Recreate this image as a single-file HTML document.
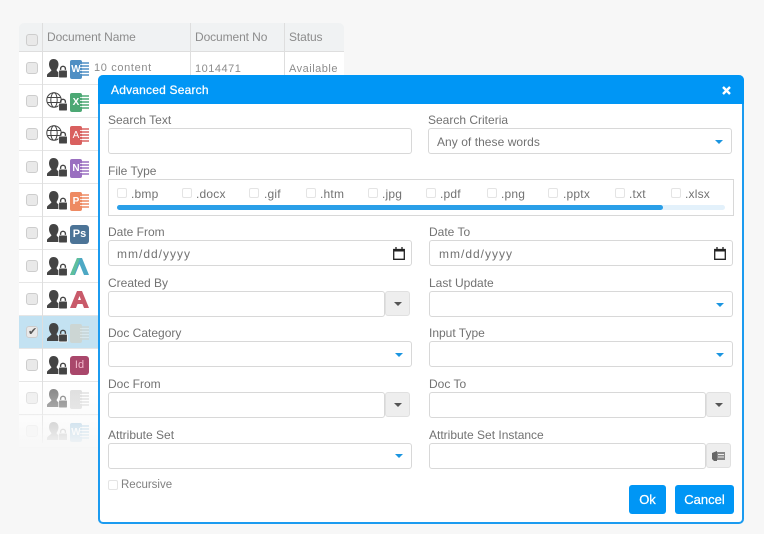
<!DOCTYPE html>
<html><head><meta charset="utf-8"><style>
html,body{margin:0;padding:0}
body{width:764px;height:534px;background:#f7f7f7;position:relative;overflow:hidden;font-family:"Liberation Sans",sans-serif;color:#666}
div,span,svg{position:absolute;box-sizing:border-box}
.t{white-space:nowrap}
.lb{font-size:12px;color:#727272;white-space:nowrap;line-height:14px}
.in{background:#fff;border:1px solid #d8d8d8;border-radius:3px;height:26px}
.btn{background:#eee;border:1px solid #e0e0e0;border-radius:3px;width:25px;height:25px}
.ar{width:0;height:0;border-left:4px solid transparent;border-right:4px solid transparent;border-top:4px solid #1b95e0}
.ag{width:0;height:0;border-left:4px solid transparent;border-right:4px solid transparent;border-top:4px solid #555;left:8px;top:10px}
.cb{width:10px;height:10px;border:1px solid #e4e4e4;border-radius:2px;background:#fff}
.ext{font-size:12px;letter-spacing:.2px;color:#727272;white-space:nowrap;line-height:14px;top:187px}
.rc{width:12px;height:12px;left:26px;margin-top:1px;background:#e9e9e9;border:1px solid #cdcdcd;border-radius:3px}
.row{left:19px;width:325px;height:33px;background:#fff;border-bottom:1px solid #e6e6e6}
.hd{font-size:12px;color:#8c8c8c;letter-spacing:-.1px;white-space:nowrap;top:30px;line-height:14px}
.ic{left:70px;width:12px;height:19px;border-radius:2px;color:#fff;font-size:10px;font-weight:bold;text-align:center;line-height:19px}
.lines{left:80px;width:9px;height:14px;opacity:.75}
</style></head><body>

<!-- table -->
<div style="left:19px;top:23px;width:325px;height:29px;background:#f0f2f3;border-bottom:1px solid #dedede;border-radius:5px 5px 0 0"></div>
<div class="row" style="top:52px"></div><div class="row" style="top:85px"></div><div class="row" style="top:118px"></div><div class="row" style="top:151px"></div><div class="row" style="top:184px"></div><div class="row" style="top:217px"></div><div class="row" style="top:250px"></div><div class="row" style="top:283px"></div>
<div class="row" style="top:316px;background:#c3e2f2"></div>
<div class="row" style="top:349px"></div><div class="row" style="top:382px"></div><div class="row" style="top:415px"></div>
<div style="left:42px;top:23px;width:1px;height:420px;background:#dedede"></div>
<div style="left:190px;top:23px;width:1px;height:52px;background:#dedede"></div>
<div style="left:284px;top:23px;width:1px;height:52px;background:#dedede"></div>
<div class="rc" style="top:33px"></div>
<div class="hd" style="left:47px">Document Name</div>
<div class="hd" style="left:195px">Document No</div>
<div class="hd" style="left:289px">Status</div>
<div class="t" style="left:94px;top:62px;font-size:11px;letter-spacing:.65px;color:#8c8c8c;line-height:13px">10 content</div>
<div class="t" style="left:195px;top:63px;font-size:11px;letter-spacing:.5px;color:#8c8c8c;line-height:13px">1014471</div>
<div class="t" style="left:289px;top:63px;font-size:11px;letter-spacing:.5px;color:#8c8c8c;line-height:13px">Available</div>

<div class="rc" style="top:61px"></div><div class="rc" style="top:94px"></div><div class="rc" style="top:127px"></div><div class="rc" style="top:160px"></div><div class="rc" style="top:193px"></div><div class="rc" style="top:226px"></div><div class="rc" style="top:259px"></div><div class="rc" style="top:292px"></div><div class="rc" style="top:325px"></div><div class="rc" style="top:358px"></div><div class="rc" style="top:391px;opacity:.7"></div><div class="rc" style="top:424px;opacity:.35"></div>
<div class="t" style="left:28px;top:326px;font-size:11px;line-height:13px;color:#555">✔</div>

<!-- person lock icons -->
<svg style="left:46px;top:0;width:22px;height:440px" viewBox="0 0 22 440">
<defs><g id="p"><path d="M7.500 0c3.200 0 5 2.300 5 5.300 0 2.300-1 4.200-2 5.700.3 1.300 1.800 2 2.700 2.700V18H1v-2.300c.8-1.700 3.600-2.800 4.500-4.500C4.300 9.800 3 7.800 3 5.300 3 2.300 4.500 0 7.500 0z" fill="#444"/><path d="M14.600 12v-2.300a2.400 2.400 0 0 1 4.800 0V12" fill="none" stroke="#444" stroke-width="1.400"/><rect x="12.700" y="11.200" width="8.600" height="7.700" rx="1" fill="#444" stroke="#fff" stroke-width=".7"/></g>
<g id="g"><circle cx="8" cy="8" r="7.200" fill="none" stroke="#444" stroke-width="1"/><ellipse cx="8" cy="8" rx="3.200" ry="7.200" fill="none" stroke="#444"/><path d="M1 5.500h14M1 10.500h14" stroke="#444"/><path d="M14.600 12v-2.300a2.400 2.400 0 0 1 4.800 0V12" fill="none" stroke="#444" stroke-width="1.400"/><rect x="12.700" y="11.200" width="8.600" height="7.700" rx="1" fill="#444" stroke="#fff" stroke-width=".7"/></g></defs>
<use href="#p" y="59"/><use href="#g" y="92"/><use href="#g" y="125"/><use href="#p" y="158"/><use href="#p" y="191"/><use href="#p" y="224"/><use href="#p" y="257"/><use href="#p" y="290"/><use href="#p" y="323"/><use href="#p" y="356"/><use href="#p" y="389" opacity=".7"/><use href="#p" y="422" opacity=".35"/>
</svg>

<!-- app icons -->
<div class="ic" style="top:60px;background:#4f8fc4">W</div><div class="lines" style="top:62px;background:repeating-linear-gradient(#4f8fc4 0 2px,#fff 2px 3px)"></div>
<div class="ic" style="top:93px;background:#4ca874">X</div><div class="lines" style="top:95px;background:repeating-linear-gradient(#4ca874 0 2px,#fff 2px 3px)"></div>
<div class="ic" style="top:126px;background:#d9605f;font-weight:normal">A</div><div class="lines" style="top:128px;background:repeating-linear-gradient(#d9605f 0 2px,#fff 2px 3px)"></div>
<div class="ic" style="top:159px;background:#9a6fc0">N</div><div class="lines" style="top:161px;background:repeating-linear-gradient(#9a6fc0 0 2px,#fff 2px 3px)"></div>
<div class="ic" style="top:192px;background:#ee8a62">P</div><div class="lines" style="top:194px;background:repeating-linear-gradient(#ee8a62 0 2px,#fff 2px 3px)"></div>
<div class="ic" style="top:225px;width:19px;background:#4c7497;border-radius:3px;font-size:11px">Ps</div>
<svg style="left:70px;top:257px;width:19px;height:20px" viewBox="0 0 19 20"><path d="M0 18L7 1h5l7 17h-5L9.500 7 5 18z" fill="#4da8c4"/><path d="M0 18L7 1h3L4 18z" fill="#5fbf9c"/></svg>
<svg style="left:70px;top:290px;width:19px;height:20px" viewBox="0 0 19 20"><path d="M0 18L7 1h5l7 17h-5l-1.500-4h-5L6 18zM8 10h3L9.500 6z" fill="#c95a6a"/></svg>
<div class="ic" style="top:324px;background:#ccd6d4"></div><div class="lines" style="top:326px;background:repeating-linear-gradient(#ccd6d4 0 2px,#dfeaec 2px 3px)"></div>
<div class="ic" style="top:356px;width:19px;background:#a9476b;border-radius:3px;font-weight:normal;font-size:11px;color:#f3b8cc">Id</div>
<div class="ic" style="top:390px;background:#dcdcdc"></div><div class="lines" style="top:392px;background:repeating-linear-gradient(#dcdcdc 0 2px,#fff 2px 3px)"></div>
<div class="ic" style="top:423px;background:#b5d4e8">W</div><div class="lines" style="top:425px;background:repeating-linear-gradient(#b5d4e8 0 2px,#fff 2px 3px)"></div>

<!-- bottom fade -->
<div style="left:0;top:415px;width:98px;height:50px;background:linear-gradient(rgba(247,247,247,.3),#f7f7f7 70%)"></div>
<div style="left:0;top:380px;width:98px;height:36px;background:linear-gradient(rgba(247,247,247,0),rgba(247,247,247,.45))"></div>

<!-- modal -->
<div style="left:98px;top:75px;width:646px;height:449px;background:#fff;border:2px solid #1b9bf0;border-top:0;border-radius:5px"></div>
<div style="left:98px;top:75px;width:646px;height:29px;background:#0096f5;border-radius:5px 5px 0 0"></div>
<div class="t" style="left:111px;top:83px;font-size:12px;color:#fff;line-height:14px;letter-spacing:.2px;-webkit-text-stroke:.25px #fff">Advanced Search</div>
<svg style="left:722px;top:86px;width:9px;height:9px" viewBox="0 0 9 9"><path d="M1 1l7 7M8 1l-7 7" stroke="#fff" stroke-width="2.400"/></svg>

<div class="lb" style="left:108px;top:113px">Search Text</div>
<div class="in" style="left:108px;top:128px;width:304px"></div>
<div class="lb" style="left:428px;top:113px">Search Criteria</div>
<div class="in" style="left:428px;top:128px;width:304px"></div>
<div class="t" style="left:437px;top:135px;font-size:12px;letter-spacing:.05px;color:#727272;line-height:14px">Any of these words</div>
<div class="ar" style="left:715px;top:140px"></div>

<div class="lb" style="left:108px;top:164px">File Type</div>
<div style="left:108px;top:179px;width:626px;height:37px;background:#fff;border:1px solid #d8d8d8"></div>
<div class="cb" style="left:117px;top:188px"></div><div class="ext" style="left:131px">.bmp</div>
<div class="cb" style="left:182px;top:188px"></div><div class="ext" style="left:196px">.docx</div>
<div class="cb" style="left:249px;top:188px"></div><div class="ext" style="left:264px">.gif</div>
<div class="cb" style="left:306px;top:188px"></div><div class="ext" style="left:320px">.htm</div>
<div class="cb" style="left:368px;top:188px"></div><div class="ext" style="left:382px">.jpg</div>
<div class="cb" style="left:426px;top:188px"></div><div class="ext" style="left:440px">.pdf</div>
<div class="cb" style="left:487px;top:188px"></div><div class="ext" style="left:501px">.png</div>
<div class="cb" style="left:548px;top:188px"></div><div class="ext" style="left:563px">.pptx</div>
<div class="cb" style="left:615px;top:188px"></div><div class="ext" style="left:629px">.txt</div>
<div class="cb" style="left:671px;top:188px"></div><div class="ext" style="left:685px">.xlsx</div>
<div style="left:117px;top:205px;width:608px;height:5px;background:#e3f1fb;border-radius:3px"></div>
<div style="left:117px;top:205px;width:546px;height:5px;background:#2a9fe8;border-radius:3px"></div>

<div class="lb" style="left:108px;top:225px">Date From</div>
<div class="in" style="left:108px;top:240px;width:304px"></div>
<div class="t" style="left:117px;top:247px;font-size:12px;letter-spacing:1px;color:#727272;line-height:14px">mm/dd/yyyy</div>
<svg style="left:393px;top:247px;width:12px;height:13px" viewBox="0 0 12 13"><path d="M.7 2.500h10.600v9.800H.7z" fill="none" stroke="#222" stroke-width="1.300"/><path d="M1 2h10v2.500H1z" fill="#222"/><path d="M3 0v2M9 0v2" stroke="#222" stroke-width="1.300"/></svg>
<div class="lb" style="left:429px;top:225px">Date To</div>
<div class="in" style="left:429px;top:240px;width:304px"></div>
<div class="t" style="left:439px;top:247px;font-size:12px;letter-spacing:1px;color:#727272;line-height:14px">mm/dd/yyyy</div>
<svg style="left:714px;top:247px;width:12px;height:13px" viewBox="0 0 12 13"><path d="M.7 2.500h10.600v9.800H.7z" fill="none" stroke="#222" stroke-width="1.300"/><path d="M1 2h10v2.500H1z" fill="#222"/><path d="M3 0v2M9 0v2" stroke="#222" stroke-width="1.300"/></svg>

<div class="lb" style="left:108px;top:276px">Created By</div>
<div class="in" style="left:108px;top:291px;width:277px"></div>
<div class="btn" style="left:385px;top:291px"><div class="ag"></div></div>
<div class="lb" style="left:429px;top:276px">Last Update</div>
<div class="in" style="left:429px;top:291px;width:304px"></div>
<div class="ar" style="left:716px;top:303px"></div>

<div class="lb" style="left:108px;top:326px">Doc Category</div>
<div class="in" style="left:108px;top:341px;width:304px"></div>
<div class="ar" style="left:395px;top:353px"></div>
<div class="lb" style="left:429px;top:326px">Input Type</div>
<div class="in" style="left:429px;top:341px;width:304px"></div>
<div class="ar" style="left:716px;top:353px"></div>

<div class="lb" style="left:108px;top:377px">Doc From</div>
<div class="in" style="left:108px;top:392px;width:277px"></div>
<div class="btn" style="left:385px;top:392px"><div class="ag"></div></div>
<div class="lb" style="left:429px;top:377px">Doc To</div>
<div class="in" style="left:429px;top:392px;width:277px"></div>
<div class="btn" style="left:706px;top:392px"><div class="ag"></div></div>

<div class="lb" style="left:108px;top:428px">Attribute Set</div>
<div class="in" style="left:108px;top:443px;width:304px"></div>
<div class="ar" style="left:395px;top:454px"></div>
<div class="lb" style="left:429px;top:428px">Attribute Set Instance</div>
<div class="in" style="left:429px;top:443px;width:277px"></div>
<div class="btn" style="left:706px;top:443px"><svg style="left:5px;top:7px;width:13px;height:10px" viewBox="0 0 13 10"><path d="M0 2l5-2v10H2L0 8z" fill="#666"/><path d="M5 1h8v8H5z" fill="#888"/><path d="M6 3.500h6M6 6h6" stroke="#eee"/></svg></div>

<div class="cb" style="left:108px;top:480px"></div>
<div class="lb" style="left:121px;top:478px;color:#808080;font-size:11.5px">Recursive</div>

<div style="left:629px;top:485px;width:37px;height:29px;background:#0096f5;border-radius:3px;color:#fff;font-size:13px;text-align:center;line-height:29px;-webkit-text-stroke:.25px #fff">Ok</div>
<div style="left:675px;top:485px;width:59px;height:29px;background:#0096f5;border-radius:3px;color:#fff;font-size:13px;text-align:center;line-height:29px;-webkit-text-stroke:.25px #fff">Cancel</div>

</body></html>
